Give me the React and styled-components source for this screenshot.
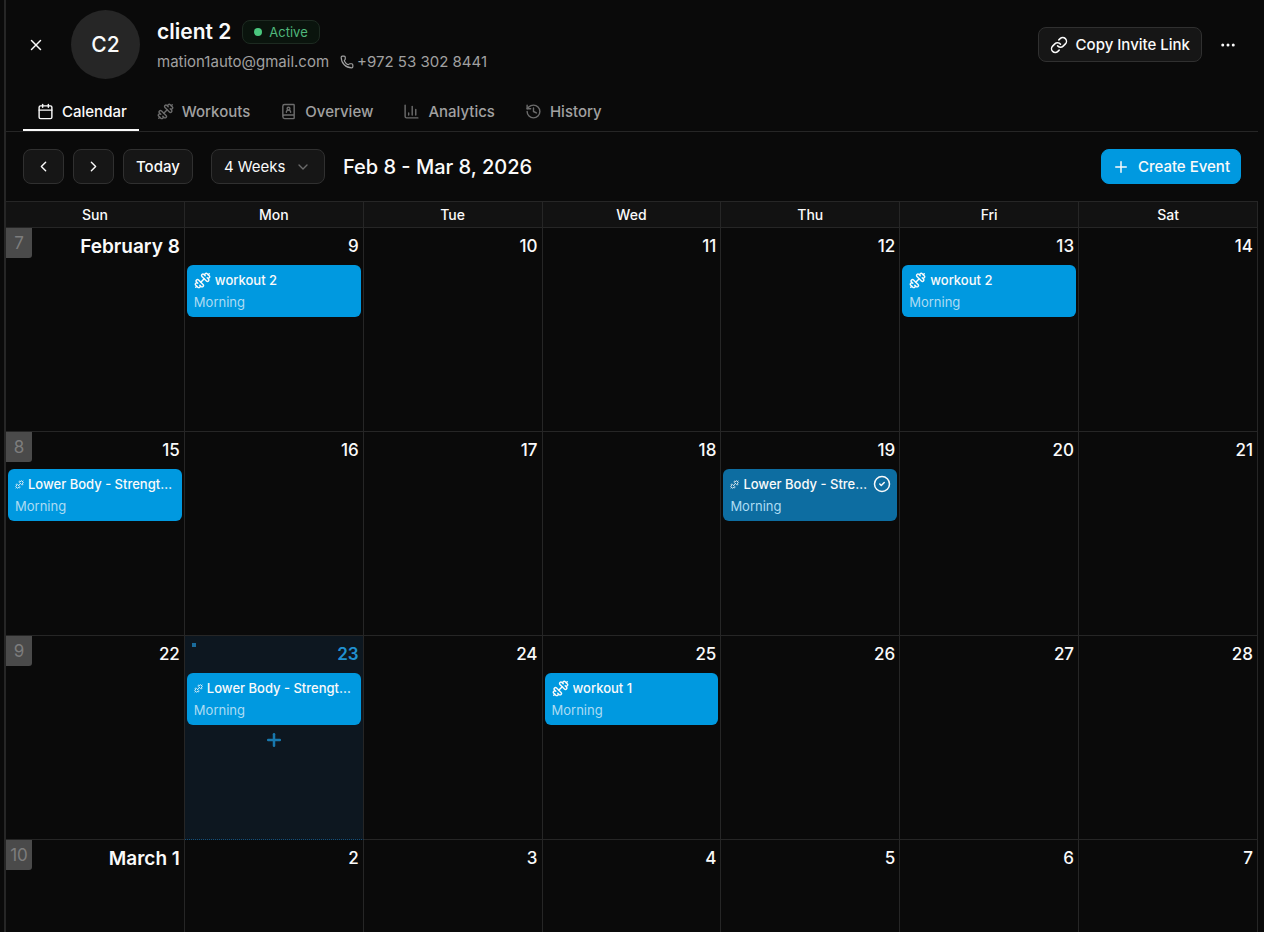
import React, {useState} from "react";
import styled, {createGlobalStyle} from "styled-components";
import {
    BookUser,
    Calendar,
    ChartColumn,
    ChevronDown,
    ChevronLeft,
    ChevronRight,
    CircleCheck,
    Dumbbell,
    Ellipsis,
    History,
    Link,
    Phone,
    Plus,
    X
} from "lucide-react";

const GlobalStyle = createGlobalStyle`
    * {
        box-sizing: border-box;
    }

    body {
        margin: 0;
        background-color: #0a0a0a;
        color: #fafafa;
        font-family: Inter, "Liberation Sans", sans-serif;
        font-size: 15px;
    }

    button, select {
        font: inherit;
        color: inherit;
        cursor: pointer;
    }
`;

// page frame
const Page = styled.div`
    display: flex;
    flex-direction: column;
    height: 100vh;
    margin: 0 6px 0 4px;
    border-left: 2px solid #262626;
    overflow: hidden;
`;

// client header
const Header = styled.header`
    display: flex;
    align-items: center;
    gap: 17px;
    padding: 10px 12px 0;
`;

const IconButton = styled.button`
    display: flex;
    align-items: center;
    justify-content: center;
    width: 36px;
    height: 36px;
    padding: 0;
    border: 0;
    border-radius: 8px;
    background: none;
`;

const Avatar = styled.div`
    display: flex;
    align-items: center;
    justify-content: center;
    width: 69px;
    height: 69px;
    border-radius: 50%;
    background-color: #262626;
    font-size: 21px;
    font-weight: 500;
`;

const ClientInfo = styled.div`
    display: flex;
    flex-direction: column;
    gap: 6px;
    flex: 1;
`;

const ClientRow = styled.div`
    display: flex;
    align-items: center;
    gap: 11px;
`;

const ClientName = styled.h1`
    margin: 0;
    font-size: 21px;
    line-height: 28px;
    font-weight: 600;
`;

const Status = styled.span`
    display: flex;
    align-items: center;
    gap: 7px;
    height: 24px;
    padding: 0 11px;
    border: 1px solid #1d2a21;
    border-radius: 8px;
    background-color: #0a140d;
    color: #4fb87c;
    font-size: 13px;
`;

const StatusDot = styled.span`
    width: 8px;
    height: 8px;
    border-radius: 50%;
    background-color: #4ac77e;
`;

const Contact = styled.a`
    display: flex;
    align-items: center;
    gap: 3px;
    color: #a1a1a1;
    line-height: 20px;
    text-decoration: none;
`;

const HeaderActions = styled.div`
    display: flex;
    align-items: center;
    gap: 8px;
`;

const Button = styled.button`
    display: flex;
    align-items: center;
    justify-content: center;
    gap: 8px;
    height: 35px;
    min-width: 41px;
    padding: 0 ${props => props.$padding || "12px"};
    border: 1px solid ${props => (props.$primary ? "#0099e0" : "#303030")};
    border-radius: 8px;
    background-color: ${props => (props.$primary ? "#0099e0" : "#161616")};
    font-weight: 500;
    white-space: nowrap;
`;

// tabs
const Tabs = styled.nav`
    display: flex;
    gap: 4px;
    margin-top: 14px;
    padding: 0 17px;
    border-bottom: 1px solid #262626;
`;

const Tab = styled.button`
    display: flex;
    align-items: center;
    gap: 8px;
    height: 38px;
    padding: 0 12px 0 14px;
    border: 0;
    border-bottom: 2px solid ${props => (props.$active ? "#fafafa" : "transparent")};
    background: none;
    color: ${props => (props.$active ? "#fafafa" : "#a1a1a1")};
    font-weight: 500;

    svg {
        opacity: ${props => (props.$active ? 1 : 0.65)};
    }
`;

// calendar toolbar
const Toolbar = styled.div`
    display: flex;
    align-items: center;
    justify-content: space-between;
    padding: 17px;
`;

const ToolbarGroup = styled.div`
    display: flex;
    align-items: center;
    gap: ${props => props.$gap};
`;

const SelectWrap = styled.label`
    position: relative;
    display: flex;
    align-items: center;

    svg {
        position: absolute;
        right: 14px;
        color: #6b6b6b;
        pointer-events: none;
    }
`;

const Select = styled.select`
    appearance: none;
    height: 35px;
    padding: 0 38px 0 12px;
    border: 1px solid #303030;
    border-radius: 8px;
    background-color: #161616;
`;

const RangeTitle = styled.h2`
    margin: 0;
    font-size: 20px;
    line-height: 28px;
    font-weight: 500;
`;

// month grid
const CalendarArea = styled.div`
    flex: 1;
    min-height: 0;
    overflow: hidden;
`;

const Grid = styled.table`
    width: 100%;
    table-layout: fixed;
    border-collapse: separate;
    border-spacing: 0;
`;

const DayHeading = styled.th`
    height: 27px;
    padding: 0;
    border: solid #262626;
    border-width: 1px 1px 1px 0;
    background-color: #121212;
    font-size: 14px;
    font-weight: 500;
`;

const DayCell = styled.td`
    position: relative;
    height: 204px;
    padding: 0 2px;
    border-right: 1px solid #262626;
    border-bottom: 1px ${props => (props.$today ? "dotted #14507a" : "solid #262626")};
    background-color: ${props => (props.$today ? "#0d1720" : "transparent")};
    vertical-align: top;
`;

const DayNumber = styled.div`
    padding-right: 2px;
    color: ${props => (props.$today ? "#2090d0" : "#fafafa")};
    font-size: ${props => (props.$first ? "19px" : "17px")};
    font-weight: ${props => (props.$first || props.$today ? 600 : 500)};
    line-height: 37px;
    text-align: right;
`;

const WeekNumber = styled.span`
    position: absolute;
    top: 0;
    left: 0;
    width: 26px;
    height: 30px;
    border-bottom-right-radius: 3px;
    background-color: #4a4a4a;
    color: #7d7d7d;
    font-size: 17px;
    line-height: 31px;
    text-align: center;
`;

const TodayMark = styled.span`
    position: absolute;
    top: 7px;
    left: 7px;
    width: 4px;
    height: 4px;
    background-color: #1a6c9c;
`;

const EventCard = styled.button`
    display: block;
    width: 100%;
    height: 52px;
    padding: 4px 6px 4px 7px;
    border: 0;
    border-radius: 6px;
    background-color: ${props => (props.$done ? "#0d6da1" : "#0099e0")};
    font-size: 13px;
    line-height: 22px;
    text-align: left;
`;

const EventTitle = styled.span`
    display: flex;
    align-items: center;
    gap: 4px;
    font-weight: 500;

    svg {
        flex: none;
    }
`;

const EventName = styled.span`
    flex: 1;
    overflow: hidden;
    text-overflow: ellipsis;
    white-space: nowrap;
`;

const EventTime = styled.span`
    display: block;
    color: #addcf3;
`;

const AddButton = styled.button`
    display: flex;
    justify-content: center;
    width: 100%;
    padding: 5px 0;
    border: 0;
    background: none;
    color: #1878ad;
`;

const TABS = [
    {name: "Calendar", icon: Calendar},
    {name: "Workouts", icon: Dumbbell},
    {name: "Overview", icon: BookUser},
    {name: "Analytics", icon: ChartColumn},
    {name: "History", icon: History}
];

const DAYS = ["Sun", "Mon", "Tue", "Wed", "Thu", "Fri", "Sat"];

const WEEKS = [
    {number: 7, days: ["February 8", 9, 10, 11, 12, 13, 14]},
    {number: 8, days: [15, 16, 17, 18, 19, 20, 21]},
    {number: 9, days: [22, 23, 24, 25, 26, 27, 28]},
    {number: 10, days: ["March 1", 2, 3, 4, 5, 6, 7]}
];

const TODAY = 23;

const EVENTS = {
    9: {name: "workout 2"},
    13: {name: "workout 2"},
    15: {name: "Lower Body - Strength Day", small: true},
    19: {name: "Lower Body - Strength Day", small: true, done: true},
    23: {name: "Lower Body - Strength Day", small: true},
    25: {name: "workout 1"}
};

function Event({event}) {
    return (
        <EventCard $done={event.done}>
            <EventTitle>
                <Dumbbell size={event.small ? 9 : 17} />
                <EventName>{event.name}</EventName>
                {event.done && <CircleCheck size={18} />}
            </EventTitle>
            <EventTime>Morning</EventTime>
        </EventCard>
    )
}

function Day({day, week}) {
    const isToday = day === TODAY;

    return (
        <DayCell $today={isToday}>
            {week && <WeekNumber>{week}</WeekNumber>}
            {isToday && <TodayMark />}
            <DayNumber $today={isToday} $first={typeof day === "string"}>{day}</DayNumber>
            {EVENTS[day] && <Event event={EVENTS[day]} />}
            {isToday && <AddButton aria-label="Add event"><Plus size={20} strokeWidth={3} /></AddButton>}
        </DayCell>
    )
}

export default function App() {

    const [activeTab, setActiveTab] = useState("Calendar");
    const [view, setView] = useState("4 Weeks");

    return (
        <Page>
            <GlobalStyle />
            <Header>
                <IconButton aria-label="Close"><X size={18} /></IconButton>
                <Avatar>C2</Avatar>
                <ClientInfo>
                    <ClientRow>
                        <ClientName>client 2</ClientName>
                        <Status><StatusDot />Active</Status>
                    </ClientRow>
                    <ClientRow>
                        <Contact href="mailto:mation1auto@gmail.com">mation1auto@gmail.com</Contact>
                        <Contact href="tel:+972533028441"><Phone size={14} />+972 53 302 8441</Contact>
                    </ClientRow>
                </ClientInfo>
                <HeaderActions>
                    <Button $padding="11px"><Link size={18} />Copy Invite Link</Button>
                    <IconButton aria-label="More"><Ellipsis size={18} /></IconButton>
                </HeaderActions>
            </Header>

            <Tabs>
                {TABS.map(({name, icon: Icon}) => (
                    <Tab key={name} $active={name === activeTab} onClick={() => setActiveTab(name)}>
                        <Icon size={17} />
                        {name}
                    </Tab>
                ))}
            </Tabs>

            <Toolbar>
                <ToolbarGroup $gap="18px">
                    <ToolbarGroup $gap="9px">
                        <Button aria-label="Previous" $padding="11px"><ChevronLeft size={17} /></Button>
                        <Button aria-label="Next" $padding="11px"><ChevronRight size={17} /></Button>
                        <Button>Today</Button>
                    </ToolbarGroup>
                    <SelectWrap>
                        <Select aria-label="View" value={view} onChange={e => setView(e.target.value)}>
                            <option>4 Weeks</option>
                            <option>Month</option>
                            <option>Week</option>
                        </Select>
                        <ChevronDown size={16} />
                    </SelectWrap>
                    <RangeTitle>Feb 8 - Mar 8, 2026</RangeTitle>
                </ToolbarGroup>
                <Button $primary $padding="10px"><Plus size={18} />Create Event</Button>
            </Toolbar>

            <CalendarArea>
                <Grid>
                    <thead>
                        <tr>
                            {DAYS.map(day => <DayHeading key={day} scope="col">{day}</DayHeading>)}
                        </tr>
                    </thead>
                    <tbody>
                        {WEEKS.map(week => (
                            <tr key={week.number}>
                                {week.days.map((day, i) => (
                                    <Day key={day} day={day} week={i === 0 ? week.number : null} />
                                ))}
                            </tr>
                        ))}
                    </tbody>
                </Grid>
            </CalendarArea>
        </Page>
    )
}
